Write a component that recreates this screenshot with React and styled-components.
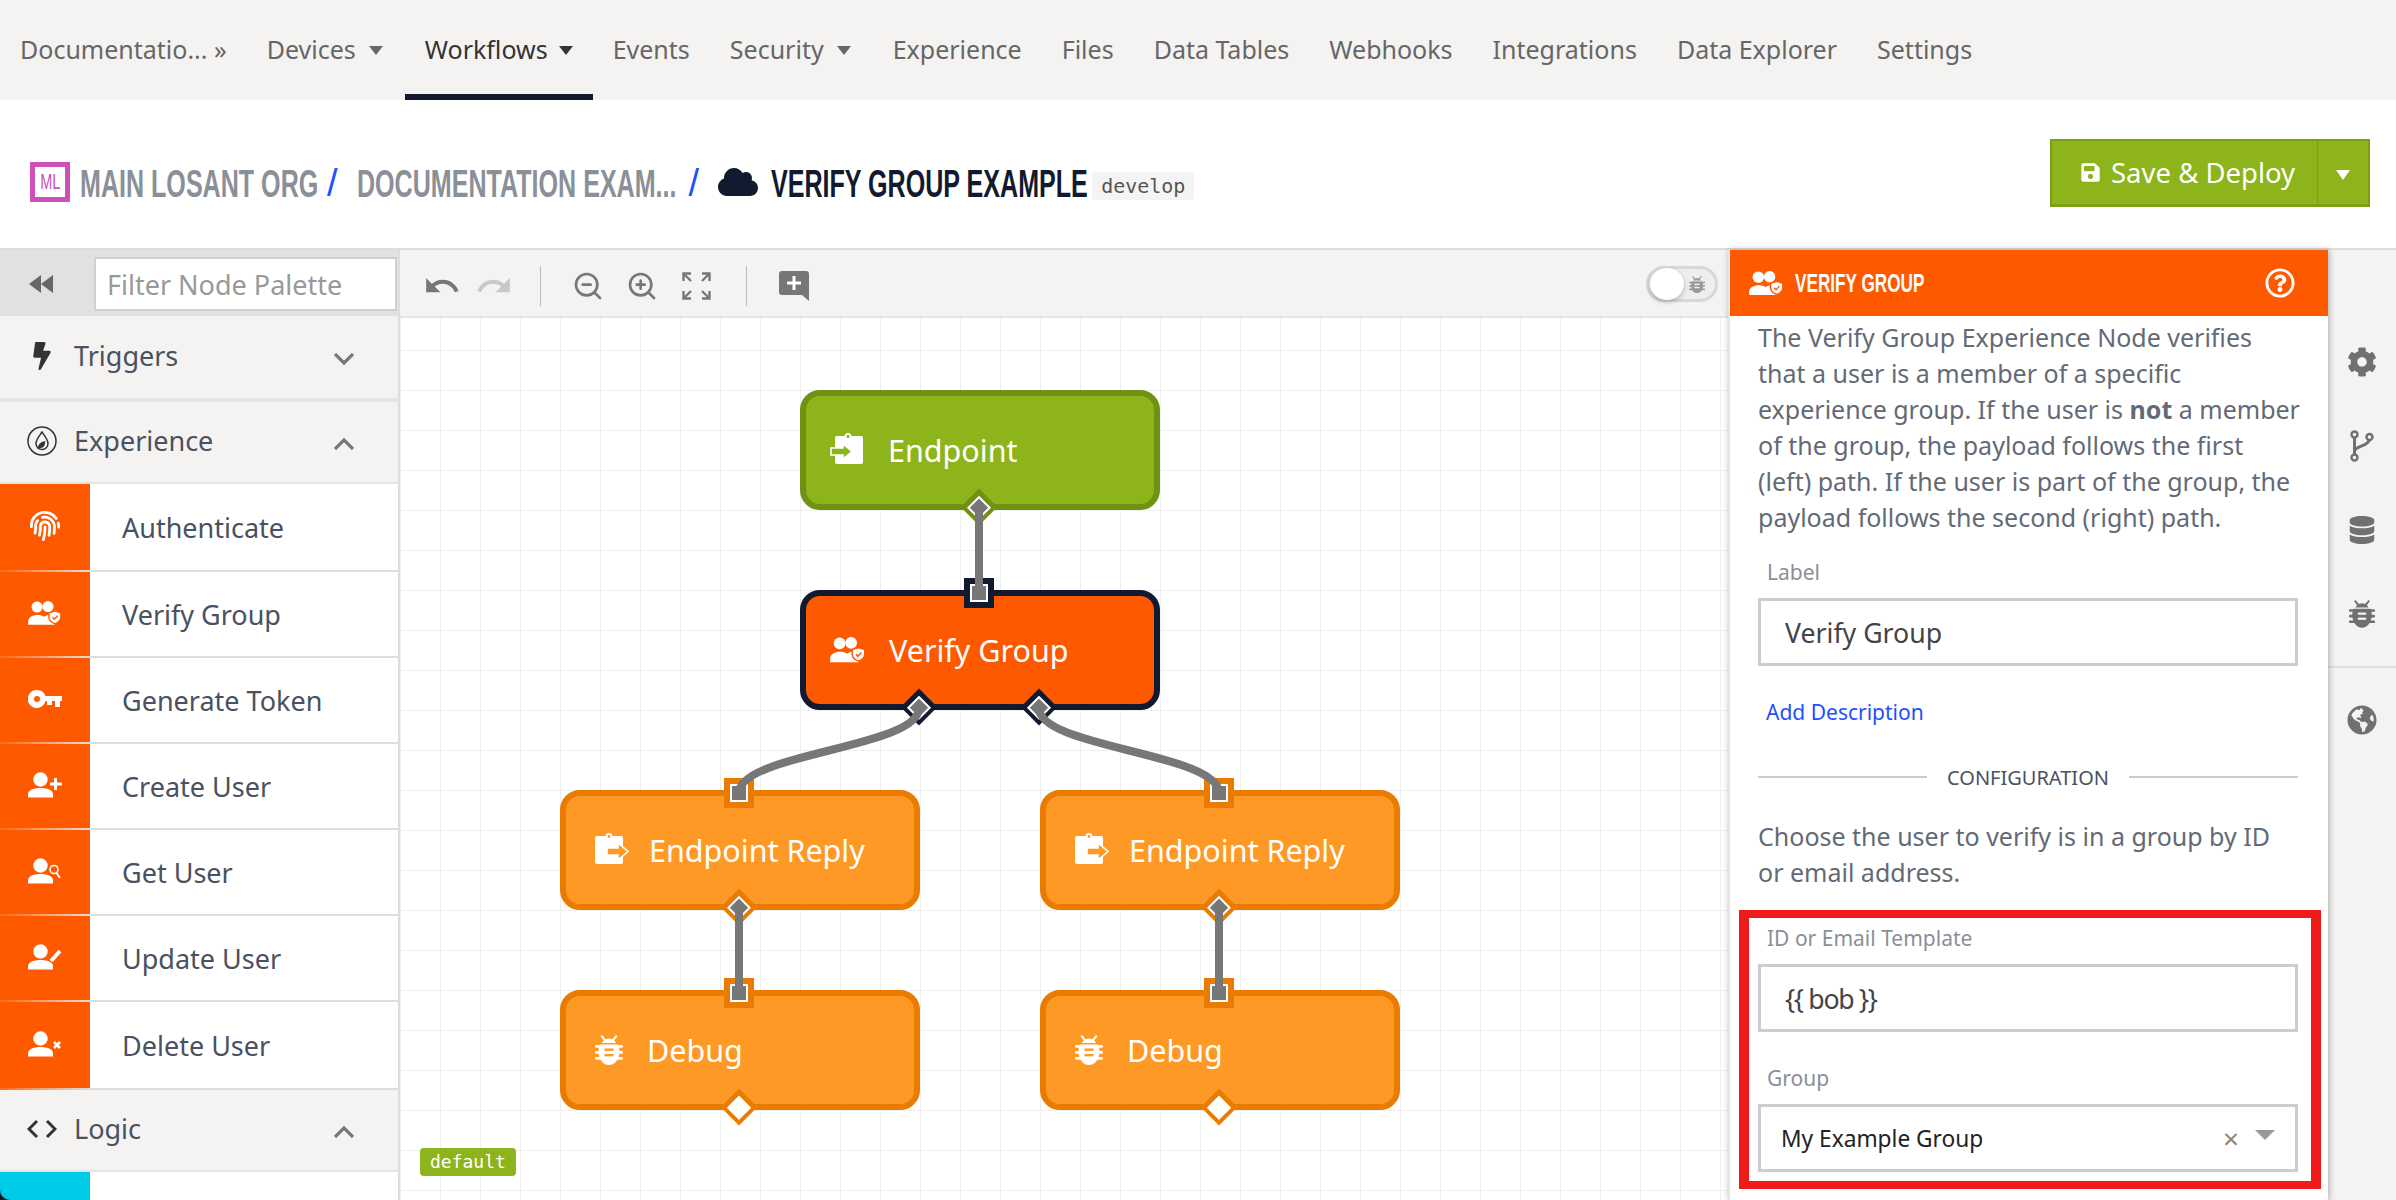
import React from 'react'
import styled, { createGlobalStyle } from 'styled-components'
import { FaCog, FaDatabase, FaGlobeAmericas, FaFingerprint, FaCloud, FaSave, FaBolt, FaRegQuestionCircle } from 'react-icons/fa'
import { MdUndo, MdRedo } from 'react-icons/md'
import { ZoomIn, ZoomOut } from 'lucide-react'

const ORANGE = '#ff5900'
const GREEN = '#8db41b'
const NAVY = '#111a2e'
const AMBER = '#ff9926'
const BODY_FONT = '"Noto Sans", "Open Sans", sans-serif'
const TITLE_FONT = '"Liberation Sans", sans-serif'
const MONO_FONT = '"DejaVu Sans Mono", "Liberation Mono", monospace'

const GlobalStyle = createGlobalStyle`
    html, body {
        margin: 0;
        padding: 0;
        background: #fff;
    }
    * {
        box-sizing: border-box;
    }
`

function GroupIcon({ cut = ORANGE, size = 34 }) {
    return (
        <svg width={size} height={size * 0.7} viewBox="0 0 34 24" fill="currentColor">
            <circle cx="9" cy="6" r="5.6" />
            <circle cx="20" cy="5.6" r="5.6" />
            <path d="M0 24v-3.5C0 16 5 14 9.5 14c2.6 0 5 .6 6.6 1.9C18 14.600 19.500 14 21 14c3 0 5 1 6 2.500V24z" />
            <path d="M27 10l6 2v4.500c0 3-2.400 5.200-6 6.500-3.600-1.300-6-3.500-6-6.500V12z" stroke={cut} strokeWidth="1.4" />
            <path d="M24.500 16.400l1.900 2 3.300-3.600" fill="none" stroke={cut} strokeWidth="1.4" />
        </svg>
    )
}

function UserBase({ children }) {
    return (
        <svg width="34" height="26" viewBox="0 0 34 26" fill="currentColor">
            <circle cx="12.500" cy="7.500" r="7.200" />
            <path d="M0 25.500v-3.200c0-4.300 6-6.300 12.500-6.300S25 18 25 22.300v3.200z" />
            {children}
        </svg>
    )
}

const KeyIcon = () => (
    <svg width="34" height="18" viewBox="0 0 34 18" fill="currentColor">
        <path fillRule="evenodd" d="M9 0a9 9 0 0 1 8.500 6H34v5h-2v6h-5v-6h-3v4h-5v-4h-1.500A9 9 0 1 1 9 0zm0 6a3 3 0 1 0 0 6 3 3 0 0 0 0-6z" />
    </svg>
)

const EndpointIcon = ({ cut }) => (
    <svg width="34" height="34" viewBox="0 0 34 34" fill="#fff">
        <rect x="5" y="3" width="28" height="28" rx="2" />
        <circle cx="18" cy="3.500" r="3.500" />
        <circle cx="18" cy="3.500" r="1.400" fill={cut} />
        <path d="M1 15h12v-4l9 7.500-9 7.500v-4H1z" fill={cut} stroke="#fff" strokeWidth="1.600" />
    </svg>
)

const ReplyIcon = ({ cut }) => (
    <svg width="34" height="34" viewBox="0 0 34 34" fill="#fff">
        <rect x="0" y="3" width="28" height="28" rx="2" />
        <circle cx="14" cy="3.500" r="3.500" />
        <circle cx="14" cy="3.500" r="1.400" fill={cut} />
        <path d="M12 15h11v-5l10 8.500-10 8.500v-5H12z" fill={cut} stroke="#fff" strokeWidth="1.600" />
    </svg>
)

const BugIcon = ({ cut, size = 28 }) => (
    <svg width={size} height={size * 1.07} viewBox="0 0 28 30" fill="currentColor">
        <path d="M7 0l3.600 4.300a8 8 0 0 1 6.800 0L21 0l1.500 1.300-3.300 4.300A7 7 0 0 1 21 8H7a7 7 0 0 1 1.800-2.400L5.500 1.300z" />
        <path d="M5 9.500h18c1 1.800 1.500 4 1.500 6.500 0 8-4.500 14-10.500 14S3.500 24 3.500 16c0-2.500.5-4.700 1.500-6.500z" />
        <rect x="0" y="10" width="28" height="2.800" rx="1" />
        <rect x="0" y="16" width="28" height="2.800" rx="1" />
        <rect x="0" y="22" width="28" height="2.800" rx="1" />
        <rect x="9.500" y="13.500" width="9" height="2.400" fill={cut} />
        <rect x="9.500" y="19" width="9" height="2.400" fill={cut} />
    </svg>
)

const BranchIcon = () => (
    <svg width="24" height="32" viewBox="0 0 24 32" fill="none" stroke="currentColor" strokeWidth="2.400">
        <circle cx="4.500" cy="4.500" r="3" />
        <circle cx="4.500" cy="27.500" r="3" />
        <circle cx="19.500" cy="7" r="3" />
        <path d="M4.500 7.500v17M4.500 21c1-5 12-4 15-11" strokeWidth="3" />
    </svg>
)

const FlameIcon = () => (
    <svg width="30" height="30" viewBox="0 0 30 30" fill="none" stroke="#333" strokeWidth="1.500">
        <circle cx="15" cy="15" r="14" />
        <path d="M15 6c3 4.500 6 7.500 6 11.500a6 6 0 0 1-12 0C9 13.500 12 10.500 15 6z" />
        <path d="M11.500 22c.5-3.500 3-5.500 6-6-.2 3.500-2 5.500-5 5.500z" fill="#333" />
    </svg>
)

const CodeIcon = () => (
    <svg width="30" height="20" viewBox="0 0 30 20" fill="none" stroke="#333" strokeWidth="3">
        <path d="M10 2l-8 8 8 8M20 2l8 8-8 8" />
    </svg>
)

const FitIcon = () => (
    <svg width="29" height="28" viewBox="0 0 29 28" fill="none" stroke="#777" strokeWidth="2.400">
        <path d="M1.500 9V1.500H9M2 2l7 7M27.500 9V1.500H20M27 2l-7 7M1.500 19v7.500H9M2 26l7-7M27.500 19v7.500H20M27 26l-7-7" />
    </svg>
)

const CommentIcon = () => (
    <svg width="30" height="30" viewBox="0 0 30 30">
        <path d="M3 0h24a3 3 0 0 1 3 3v27l-7-6H3a3 3 0 0 1-3-3V3a3 3 0 0 1 3-3z" fill="#777" />
        <path d="M15 5v14M8 12h14" stroke="#fff" strokeWidth="3" />
    </svg>
)

const navItems = [
    { label: 'Documentatio... »' },
    { label: 'Devices', caret: true, extra: 2 },
    { label: 'Workflows', caret: true, active: true },
    { label: 'Events' },
    { label: 'Security', caret: true, extra: 2 },
    { label: 'Experience' },
    { label: 'Files' },
    { label: 'Data Tables' },
    { label: 'Webhooks' },
    { label: 'Integrations' },
    { label: 'Data Explorer' },
    { label: 'Settings' },
]

const paletteItems = [
    { label: 'Authenticate', icon: <FaFingerprint size={30} /> },
    { label: 'Verify Group', icon: <GroupIcon /> },
    { label: 'Generate Token', icon: <KeyIcon /> },
    {
        label: 'Create User',
        icon: <UserBase><path d="M27.500 6v12M22 12h12" stroke="currentColor" strokeWidth="3" /></UserBase>,
    },
    {
        label: 'Get User',
        icon: <UserBase><circle cx="26" cy="11.500" r="4" fill="none" stroke="currentColor" strokeWidth="1.600" /><path d="M28.500 15l3.500 5" stroke="currentColor" strokeWidth="1.800" /></UserBase>,
    },
    {
        label: 'Update User',
        icon: <UserBase><path d="M23 17L32 7" stroke="currentColor" strokeWidth="4" /></UserBase>,
    },
    {
        label: 'Delete User',
        icon: <UserBase><path d="M26 11l6 6M32 11l-6 6" stroke="currentColor" strokeWidth="2.600" /></UserBase>,
    },
]

const nodes = [
    { id: 'endpoint', x: 400, y: 72, label: 'Endpoint', fill: GREEN, line: '#6f9213', icon: <EndpointIcon cut={GREEN} />, pad: 24, gap: 24, outs: [179] },
    { id: 'verify', x: 400, y: 272, label: 'Verify Group', fill: ORANGE, line: NAVY, icon: <GroupIcon size={36} />, pad: 24, gap: 23, input: true, outs: [119, 239] },
    { id: 'replyA', x: 160, y: 472, label: 'Endpoint Reply', fill: AMBER, line: '#e87b00', icon: <ReplyIcon cut={AMBER} />, pad: 29, gap: 20, input: true, outs: [179] },
    { id: 'replyB', x: 640, y: 472, label: 'Endpoint Reply', fill: AMBER, line: '#e87b00', icon: <ReplyIcon cut={AMBER} />, pad: 29, gap: 20, input: true, outs: [179] },
    { id: 'debugA', x: 160, y: 672, label: 'Debug', fill: AMBER, line: '#e87b00', icon: <BugIcon cut={AMBER} />, pad: 29, gap: 24, input: true, outs: [179], empty: true },
    { id: 'debugB', x: 640, y: 672, label: 'Debug', fill: AMBER, line: '#e87b00', icon: <BugIcon cut={AMBER} />, pad: 29, gap: 24, input: true, outs: [179], empty: true },
]

export default function App() {
    return (
        <Page>
            <GlobalStyle />
            <TopNav>
                {navItems.map(item => (
                    <NavItem key={item.label} $active={item.active}>
                        {item.label}
                        {item.caret && <NavCaret $extra={item.extra} />}
                    </NavItem>
                ))}
            </TopNav>

            <PageHeader>
                <Breadcrumbs>
                    <OrgLogo><LogoLetters>ML</LogoLetters></OrgLogo>
                    <Crumb $width={236}>MAIN LOSANT ORG</Crumb>
                    <CrumbSlash>/</CrumbSlash>
                    <Crumb $width={321}>DOCUMENTATION EXAM...</Crumb>
                    <CrumbSlash>/</CrumbSlash>
                    <CloudMark><FaCloud size={40} /></CloudMark>
                    <Crumb $width={312} $current>VERIFY GROUP EXAMPLE</Crumb>
                    <VersionChip>develop</VersionChip>
                </Breadcrumbs>
                <DeployButton>
                    <DeployMain><FaSave size={21} />Save &amp; Deploy</DeployMain>
                    <DeployMore><WhiteCaret /></DeployMore>
                </DeployButton>
            </PageHeader>

            <Workspace>
                <Palette>
                    <PaletteTools>
                        <CollapseButton>
                            <svg width="24" height="18" viewBox="0 0 24 18" fill="#666">
                                <path d="M12 0v18L0 9zM24 0v18L12 9z" />
                            </svg>
                        </CollapseButton>
                        <FilterInput>Filter Node Palette</FilterInput>
                    </PaletteTools>
                    <SectionHead $line={4}>
                        <SectionIcon><FaBolt size={28} color="#333" /></SectionIcon>
                        <SectionTitle>Triggers</SectionTitle>
                        <Chevron viewBox="0 0 20 12"><path d="M1 1l9 9 9-9" /></Chevron>
                    </SectionHead>
                    <SectionHead $line={2}>
                        <SectionIcon><FlameIcon /></SectionIcon>
                        <SectionTitle>Experience</SectionTitle>
                        <Chevron viewBox="0 0 20 12"><path d="M1 11l9-9 9 9" /></Chevron>
                    </SectionHead>
                    <ItemList>
                        {paletteItems.map(item => (
                            <PaletteItem key={item.label}>
                                <ItemIcon>{item.icon}</ItemIcon>
                                <ItemLabel>{item.label}</ItemLabel>
                            </PaletteItem>
                        ))}
                    </ItemList>
                    <SectionHead $line={2}>
                        <SectionIcon><CodeIcon /></SectionIcon>
                        <SectionTitle>Logic</SectionTitle>
                        <Chevron viewBox="0 0 20 12"><path d="M1 11l9-9 9 9" /></Chevron>
                    </SectionHead>
                    <CutOffItem><CutOffIcon /></CutOffItem>
                </Palette>

                <CanvasColumn>
                    <CanvasTools>
                        <ToolGroup>
                            <ToolIcon $wide><MdUndo size={38} color="#777" /></ToolIcon>
                            <ToolIcon $wide><MdRedo size={38} color="#c8c8c8" /></ToolIcon>
                        </ToolGroup>
                        <ToolDivider />
                        <ToolGroup $end={3}>
                            <ToolIcon><ZoomOut size={32} color="#777" strokeWidth={2} /></ToolIcon>
                            <ToolIcon><ZoomIn size={32} color="#777" strokeWidth={2} /></ToolIcon>
                            <ToolIcon><FitIcon /></ToolIcon>
                        </ToolGroup>
                        <ToolDivider />
                        <ToolIcon><CommentIcon /></ToolIcon>
                        <DebugToggle>
                            <ToggleKnob />
                            <ToggleBug><BugIcon cut="#f4f3f1" size={16} /></ToggleBug>
                        </DebugToggle>
                    </CanvasTools>
                    <Canvas>
                        <Wires width="1328" height="882" viewBox="400 318 1328 882">
                            <path d="M979 507V593" />
                            <path d="M919 708C919 748 739 753 739 793" />
                            <path d="M1039 708C1039 748 1219 753 1219 793" />
                            <path d="M739 907V993" />
                            <path d="M1219 907V993" />
                        </Wires>
                        {nodes.map(node => (
                            <FlowNode key={node.id} $x={node.x} $y={node.y} $fill={node.fill} $line={node.line} $pad={node.pad} $gap={node.gap}>
                                {node.icon}
                                <span>{node.label}</span>
                                {node.input && <SquarePort $color={node.line} />}
                                {node.outs.map(left => (
                                    <DiamondPort key={left} $color={node.line} $left={left}>
                                        <DiamondCore $empty={node.empty} />
                                    </DiamondPort>
                                ))}
                            </FlowNode>
                        ))}
                        <DefaultTag>default</DefaultTag>
                    </Canvas>
                </CanvasColumn>

                <Inspector>
                    <InspectorHead>
                        <GroupIcon size={35} />
                        <InspectorTitle>VERIFY GROUP</InspectorTitle>
                        <FaRegQuestionCircle size={30} />
                    </InspectorHead>
                    <InspectorBody>
                        <Paragraph>
                            The Verify Group Experience Node verifies<br />
                            that a user is a member of a specific<br />
                            experience group. If the user is <strong>not</strong> a member<br />
                            of the group, the payload follows the first<br />
                            (left) path. If the user is part of the group, the<br />
                            payload follows the second (right) path.
                        </Paragraph>
                        <Field $top={24}>
                            <FieldLabel>Label</FieldLabel>
                            <TextBox>Verify Group</TextBox>
                        </Field>
                        <AddLink>Add Description</AddLink>
                        <Divider><span>CONFIGURATION</span></Divider>
                        <Paragraph $top={27}>
                            Choose the user to verify is in a group by ID<br />
                            or email address.
                        </Paragraph>
                        <Field $top={35}>
                            <FieldLabel>ID or Email Template</FieldLabel>
                            <TextBox $tight>{'{{ bob }}'}</TextBox>
                        </Field>
                        <Field $top={33}>
                            <FieldLabel>Group</FieldLabel>
                            <SelectBox>
                                <span>My Example Group</span>
                                <SelectClear>×</SelectClear>
                                <SelectCaret />
                            </SelectBox>
                        </Field>
                    </InspectorBody>
                    <Highlight />
                </Inspector>

                <SideRail>
                    <RailButton><FaCog size={30} /></RailButton>
                    <RailButton><BranchIcon /></RailButton>
                    <RailButton><FaDatabase size={28} /></RailButton>
                    <RailButton><BugIcon cut="#f4f3f1" size={26} /></RailButton>
                    <RailDivider />
                    <RailButton><FaGlobeAmericas size={30} /></RailButton>
                </SideRail>
            </Workspace>
        </Page>
    )
}

const Page = styled.div`
    width: 2396px;
    height: 1200px;
    overflow: hidden;
    display: flex;
    flex-direction: column;
    font-family: ${BODY_FONT};
    background: #fff;
`

const TopNav = styled.nav`
    height: 100px;
    flex: none;
    display: flex;
    background: #f4f3f1;
`

const NavItem = styled.div`
    display: flex;
    align-items: center;
    gap: 11px;
    padding: 3px 20px 0;
    height: 100%;
    font-size: 25px;
    color: ${props => props.$active ? '#333' : '#666'};
    border-bottom: 6px solid ${props => props.$active ? NAVY : 'transparent'};
    white-space: nowrap;
`

const NavCaret = styled.i`
    width: 0;
    height: 0;
    border-left: 7px solid transparent;
    border-right: 7px solid transparent;
    border-top: 9px solid currentColor;
    margin: 3px ${props => props.$extra || 0}px 0 ${props => props.$extra || 0}px;
`

const PageHeader = styled.header`
    height: 150px;
    flex: none;
    display: flex;
    align-items: center;
    justify-content: space-between;
    padding: 0 26px 2px 30px;
    border-bottom: 2px solid #ddd;
`

const Breadcrumbs = styled.div`
    display: flex;
    align-items: center;
    margin-top: 17px;
`

const OrgLogo = styled.div`
    width: 40px;
    height: 40px;
    display: flex;
    align-items: center;
    justify-content: center;
    border: 5px solid #cc50b8;
    color: #cc50b8;
    margin-right: 10px;
`

const LogoLetters = styled.span`
    font-family: ${TITLE_FONT};
    font-size: 22px;
    transform: scaleX(.66);
`

const Crumb = styled.span`
    display: block;
    width: ${props => props.$width}px;
    white-space: nowrap;
    font-family: ${TITLE_FONT};
    font-weight: 700;
    font-size: 38px;
    line-height: 44px;
    transform: translateY(2px) scaleX(.66);
    transform-origin: left center;
    color: ${props => props.$current ? NAVY : '#8a8f98'};
`

const CrumbSlash = styled.span`
    font-family: ${TITLE_FONT};
    font-size: 38px;
    line-height: 44px;
    color: #1f4fff;
    margin: 0 19px 0 11px;
    transform: translateY(1px);
`

const CloudMark = styled.span`
    display: flex;
    color: ${NAVY};
    margin-right: 13px;
`

const VersionChip = styled.span`
    margin-left: 9px;
    padding: 0 9px;
    height: 28px;
    line-height: 28px;
    border-radius: 4px;
    background: #f4f4f4;
    color: #555;
    font-family: ${MONO_FONT};
    font-size: 20px;
    transform: translateY(4px);
`

const DeployButton = styled.div`
    width: 320px;
    height: 68px;
    display: flex;
    background: ${GREEN};
    border: 2px solid #7c9f14;
    border-bottom-width: 3px;
    color: #fff;
`

const DeployMain = styled.div`
    width: 266px;
    display: flex;
    align-items: center;
    gap: 10px;
    padding-left: 28px;
    font-size: 27.5px;
    border-right: 1px solid #7c9f14;
    white-space: nowrap;
`

const DeployMore = styled.div`
    flex: 1;
    display: flex;
    align-items: center;
    justify-content: center;
`

const WhiteCaret = styled.i`
    width: 0;
    height: 0;
    border-left: 7px solid transparent;
    border-right: 7px solid transparent;
    border-top: 10px solid #fff;
    margin-top: 4px;
`

const Workspace = styled.div`
    flex: 1;
    min-height: 0;
    display: flex;
`

const Palette = styled.aside`
    width: 400px;
    flex: none;
    border-right: 2px solid #ddd;
    display: flex;
    flex-direction: column;
`

const PaletteTools = styled.div`
    height: 66px;
    flex: none;
    display: flex;
    align-items: flex-start;
    background: #e1e1e1;
    padding-top: 7px;
`

const CollapseButton = styled.div`
    width: 94px;
    height: 54px;
    padding-right: 12px;
    display: flex;
    align-items: center;
    justify-content: center;
`

const FilterInput = styled.div`
    width: 303px;
    height: 54px;
    display: flex;
    align-items: center;
    padding-left: 11px;
    background: #fff;
    border: 2px solid #d0d0d0;
    color: #999;
    font-size: 27px;
`

const SectionHead = styled.div`
    flex: none;
    height: ${props => props.$line === 4 ? 86 : 82}px;
    display: flex;
    align-items: center;
    padding: 0 44px 3px 27px;
    background: #f4f3f1;
    border-bottom: ${props => props.$line}px solid #e4e4e4;
`

const SectionIcon = styled.span`
    width: 30px;
    display: flex;
    justify-content: center;
    margin-right: 17px;
`

const SectionTitle = styled.span`
    flex: 1;
    font-size: 27px;
    color: #4a5160;
`

const Chevron = styled.svg`
    width: 20px;
    height: 12px;
    margin-top: 6px;
    fill: none;
    stroke: #777;
    stroke-width: 3.2;
`

const ItemList = styled.div`
    flex: none;
`

const PaletteItem = styled.div`
    height: 86px;
    display: flex;
    &:first-child, &:last-child {
        height: 88px;
    }
`

const ItemIcon = styled.div`
    width: 90px;
    flex: none;
    display: flex;
    align-items: center;
    justify-content: center;
    padding-bottom: 4px;
    color: #fff;
    background: linear-gradient(90deg, rgba(255, 255, 255, .1), #ddd) left bottom / 100% 2px no-repeat, ${ORANGE};
`

const ItemLabel = styled.div`
    flex: 1;
    display: flex;
    align-items: center;
    padding: 1px 0 0 32px;
    font-size: 27px;
    color: #4a5160;
    border-bottom: 2px solid #ddd;
`

const CutOffItem = styled.div`
    flex: 1;
    display: flex;
    background: #fff;
`

const CutOffIcon = styled.div`
    width: 90px;
    background: ${NAVY};
    &::after {
        content: '';
        display: block;
        height: 100%;
        background: #00cbe6;
        border-bottom-left-radius: 10px;
    }
`

const CanvasColumn = styled.main`
    flex: 1;
    min-width: 0;
    display: flex;
    flex-direction: column;
`

const CanvasTools = styled.div`
    height: 68px;
    flex: none;
    display: flex;
    align-items: center;
    padding: 6px 10px 0 16px;
    background: #f4f3f1;
    border-bottom: 2px solid #e6e6e6;
`

const ToolGroup = styled.div`
    display: flex;
    align-items: center;
    margin-right: ${props => props.$end || 0}px;
`

const ToolIcon = styled.span`
    width: ${props => props.$wide ? 52 : 54}px;
    display: flex;
    align-items: center;
    justify-content: center;
`

const ToolDivider = styled.i`
    width: 1px;
    height: 40px;
    background: #bbb;
    margin: 0 20px;
`

const DebugToggle = styled.div`
    position: relative;
    width: 72px;
    height: 36px;
    margin: 0 0 4px auto;
    border: 3px solid #d8d8d8;
    border-radius: 18px;
    background: #eee;
`

const ToggleKnob = styled.i`
    position: absolute;
    left: 1px;
    top: -1px;
    width: 34px;
    height: 32px;
    border-radius: 50%;
    background: #fff;
    box-shadow: 0 2px 5px rgba(0, 0, 0, .25);
`

const ToggleBug = styled.span`
    position: absolute;
    right: 10px;
    top: 7px;
    display: flex;
    color: #999;
`

const Canvas = styled.div`
    position: relative;
    flex: 1;
    min-height: 0;
    overflow: hidden;
    background-color: #fff;
    background-image:
        linear-gradient(90deg, #efefef 1px, transparent 1px),
        linear-gradient(#efefef 1px, transparent 1px);
    background-size: 40px 40px;
    background-position: 0 32px;
`

const Wires = styled.svg`
    position: absolute;
    left: 0;
    top: 0;
    z-index: 3;
    pointer-events: none;
    path {
        fill: none;
        stroke: #777;
        stroke-width: 8;
    }
`

const FlowNode = styled.div`
    position: absolute;
    left: ${props => props.$x}px;
    top: ${props => props.$y}px;
    width: 360px;
    height: 120px;
    display: flex;
    align-items: center;
    gap: ${props => props.$gap}px;
    padding-left: ${props => props.$pad}px;
    border: 6px solid ${props => props.$line};
    border-radius: 20px;
    background: ${props => props.$fill};
    color: #fff;
    font-size: 30.5px;
    z-index: 1;
`

const SquarePort = styled.i`
    position: absolute;
    left: 158px;
    top: -18px;
    width: 30px;
    height: 30px;
    border: 6px solid ${props => props.$color};
    background: #777;
    box-shadow: inset 0 0 0 2px #fff;
    z-index: 2;
`

const DiamondPort = styled.i`
    position: absolute;
    left: ${props => props.$left - 19}px;
    bottom: -16px;
    width: 26px;
    height: 26px;
    display: flex;
    align-items: center;
    justify-content: center;
    transform: rotate(45deg);
    background: ${props => props.$color};
    z-index: 2;
`

const DiamondCore = styled.i`
    width: 17px;
    height: 17px;
    background: ${props => props.$empty ? '#fff' : '#777'};
    border: 2px solid #fff;
`

const DefaultTag = styled.div`
    position: absolute;
    left: 20px;
    top: 830px;
    height: 28px;
    padding: 0 10px;
    line-height: 27px;
    border-radius: 4px;
    background: ${GREEN};
    color: #fff;
    font-family: ${MONO_FONT};
    font-size: 18px;
    z-index: 2;
`

const Inspector = styled.section`
    position: relative;
    width: 600px;
    flex: none;
    display: flex;
    flex-direction: column;
    border-left: 2px solid #e6e6e6;
    background: #fff;
    box-shadow: 1px 0 6px rgba(0, 0, 0, .3);
    z-index: 5;
`

const InspectorHead = styled.div`
    height: 66px;
    flex: none;
    display: flex;
    align-items: center;
    padding: 0 33px 0 19px;
    background: ${ORANGE};
    color: #fff;
`

const InspectorTitle = styled.span`
    flex: 1;
    margin-left: 11px;
    font-family: ${TITLE_FONT};
    font-weight: 700;
    font-size: 26px;
    transform: scaleX(.66);
    transform-origin: left center;
`

const InspectorBody = styled.div`
    flex: 1;
    padding: 3px 30px 0 28px;
    overflow: hidden;
`

const Paragraph = styled.p`
    margin: ${props => props.$top || 0}px 0 0;
    font-size: 25px;
    line-height: 36px;
    white-space: nowrap;
    color: #636a75;
    strong {
        font-weight: 700;
    }
`

const Field = styled.div`
    margin-top: ${props => props.$top}px;
`

const FieldLabel = styled.div`
    height: 26px;
    line-height: 26px;
    margin-bottom: 13px;
    padding-left: 9px;
    font-size: 21px;
    color: #8a8f98;
`

const TextBox = styled.div`
    height: 68px;
    display: flex;
    align-items: center;
    padding-left: 24px;
    border: 3px solid #ccc;
    font-size: 26.7px;
    letter-spacing: ${props => props.$tight ? '-1.3px' : 'normal'};
    color: #444;
`

const AddLink = styled.div`
    margin-top: 31px;
    height: 30px;
    line-height: 30px;
    padding-left: 8px;
    font-size: 21px;
    color: #1f4fff;
`

const Divider = styled.div`
    margin-top: 36px;
    height: 28px;
    display: flex;
    align-items: center;
    gap: 20px;
    font-size: 20px;
    color: #4a5160;
    &::before, &::after {
        content: '';
        flex: 1;
        height: 2px;
        background: #ccc;
    }
`

const SelectBox = styled.div`
    height: 68px;
    display: flex;
    align-items: center;
    padding: 0 20px 0 20px;
    border: 3px solid #ccc;
    font-size: 22.7px;
    color: #222;
    span {
        flex: 1;
    }
`

const SelectClear = styled.i`
    font-style: normal;
    color: #888;
    font-size: 28px;
    margin-right: 16px;
`

const SelectCaret = styled.i`
    width: 0;
    height: 0;
    border-left: 10px solid transparent;
    border-right: 10px solid transparent;
    border-top: 10px solid #999;
    margin-bottom: 6px;
`

const Highlight = styled.div`
    position: absolute;
    left: 9px;
    top: 660px;
    width: 582px;
    height: 279px;
    border-style: solid;
    border-color: #ef1a1a;
    border-width: 8px 10px;
    pointer-events: none;
`

const SideRail = styled.aside`
    width: 68px;
    flex: none;
    display: flex;
    flex-direction: column;
    padding-top: 70px;
    background: #f4f3f1;
    color: #707070;
`

const RailButton = styled.div`
    height: 84px;
    flex: none;
    display: flex;
    align-items: center;
    justify-content: center;
`

const RailDivider = styled.i`
    height: 2px;
    flex: none;
    margin: 10px 0;
    background: #e0e0e0;
`
